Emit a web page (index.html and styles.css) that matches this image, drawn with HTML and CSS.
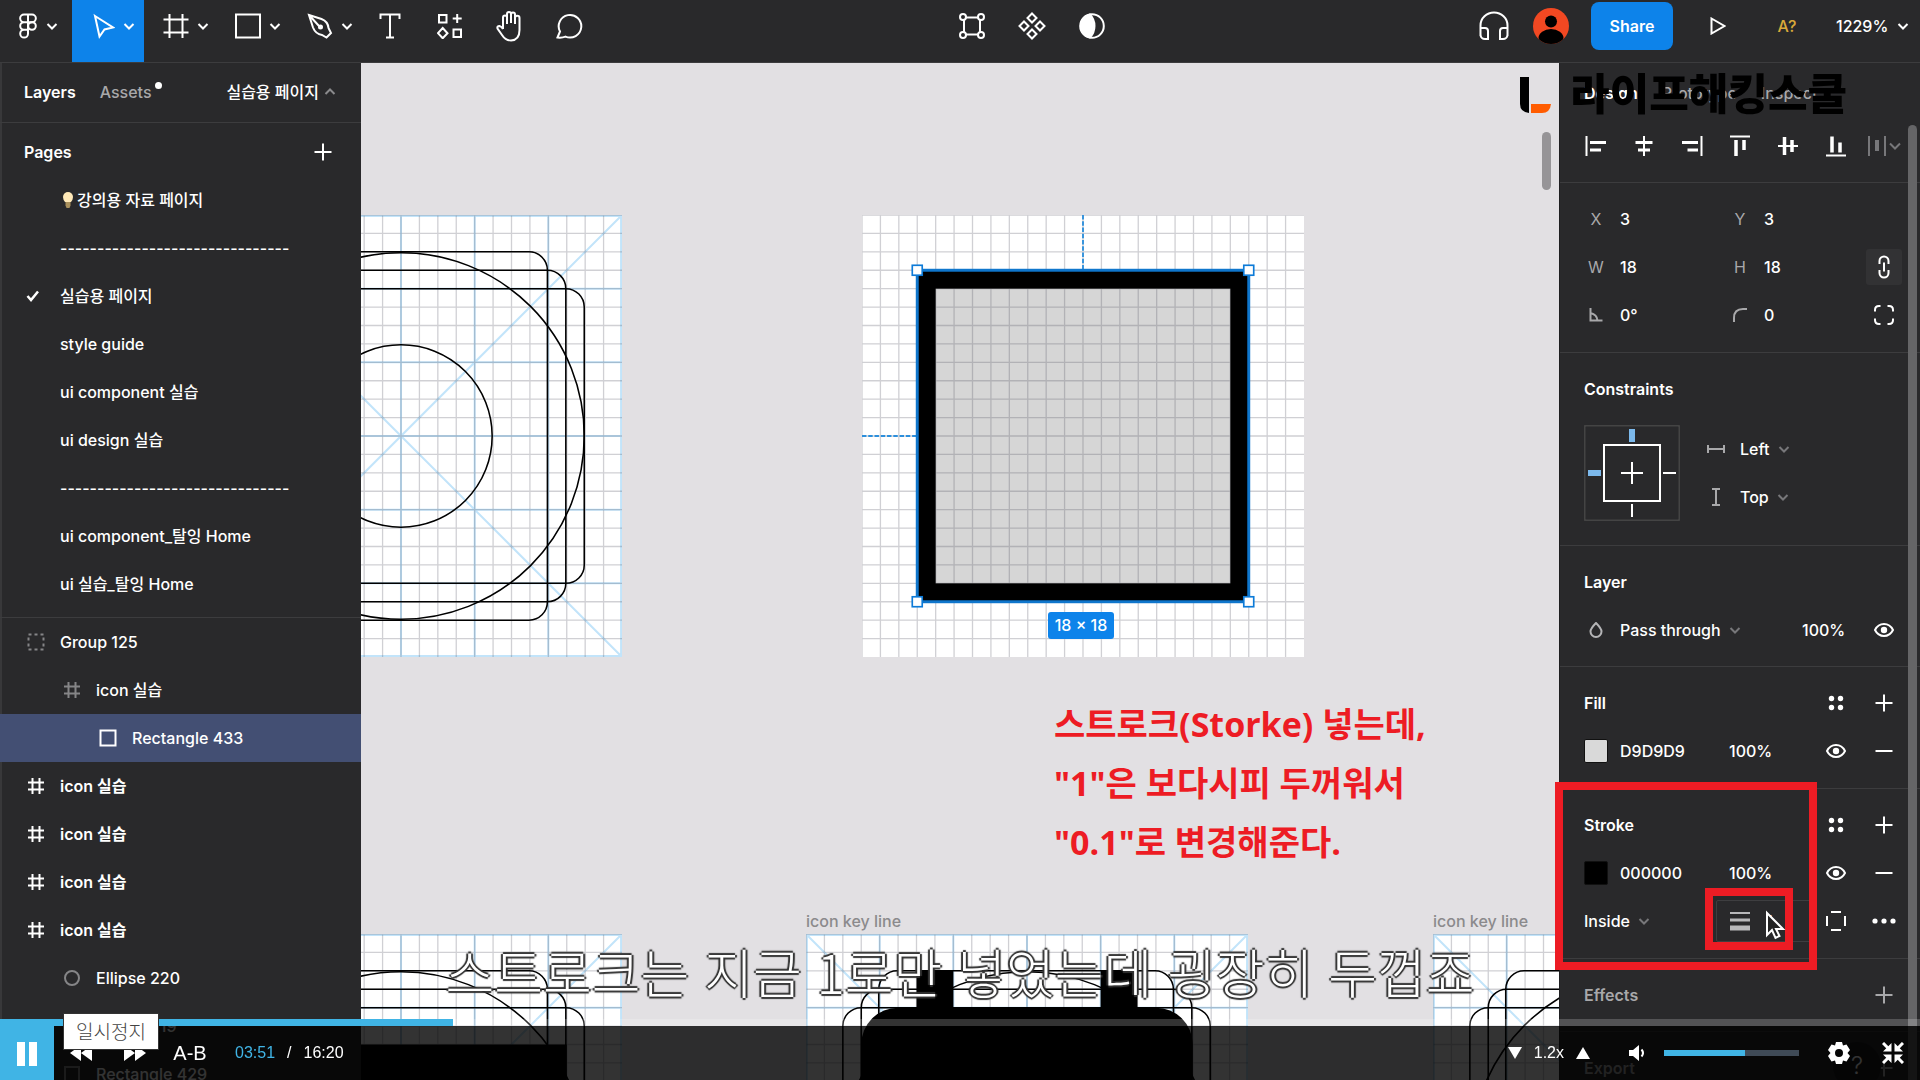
FILE: index.html
```html
<!DOCTYPE html>
<html lang="ko">
<head>
<meta charset="utf-8">
<title>Icon 실습</title>
<link rel="stylesheet" href="styles.css">
</head>
<body>
<svg class="defs" aria-hidden="true">
  <symbol id="chev" viewBox="0 0 12 12"><path d="M1.500 4 6 8.500 10.500 4"/></symbol>
  <symbol id="plus" viewBox="0 0 18 18"><path d="M9 0.500V17.500M0.500 9H17.500"/></symbol>
  <symbol id="minus" viewBox="0 0 18 18"><path d="M0.500 9H17.500"/></symbol>
  <symbol id="hash" viewBox="0 0 18 18"><path d="M5.500 1V17M12.500 1V17M1 5.500H17M1 12.500H17"/></symbol>
  <symbol id="dots4" viewBox="0 0 16 16"><g fill="currentColor" stroke="none"><circle cx="3.500" cy="3.500" r="2.700"/><circle cx="12.500" cy="3.500" r="2.700"/><circle cx="3.500" cy="12.500" r="2.700"/><circle cx="12.500" cy="12.500" r="2.700"/></g></symbol>
  <symbol id="eye" viewBox="0 0 20 14"><path d="M1 7C5-1 15-1 19 7 15 15 5 15 1 7Z"/><circle cx="10" cy="7" r="3.200" fill="currentColor" stroke="none"/></symbol>
  <symbol id="grid" viewBox="0 0 24 24">
    <path stroke="#50505f" stroke-opacity=".27" stroke-width=".07" d="M0 0V24M1 0V24M2 0V24M3 0V24M4 0V24M5 0V24M6 0V24M7 0V24M8 0V24M9 0V24M10 0V24M11 0V24M12 0V24M13 0V24M14 0V24M15 0V24M16 0V24M17 0V24M18 0V24M19 0V24M20 0V24M21 0V24M22 0V24M23 0V24M0 0H24M0 1H24M0 2H24M0 3H24M0 4H24M0 5H24M0 6H24M0 7H24M0 8H24M0 9H24M0 10H24M0 11H24M0 12H24M0 13H24M0 14H24M0 15H24M0 16H24M0 17H24M0 18H24M0 19H24M0 20H24M0 21H24M0 22H24M0 23H24"/>
  </symbol>
  <symbol id="keyline" viewBox="0 0 24 24">
    <rect width="24" height="24" fill="#fff" stroke="none"/>
    <path stroke="#a8d8f8" stroke-opacity=".7" stroke-width=".11" d="M.05 .05H23.950V23.950H.05ZM4 0V24M8 0V24M12 0V24M16 0V24M20 0V24M0 4H24M0 8H24M0 12H24M0 16H24M0 20H24M0 0 24 24M24 0 0 24"/>
    <use href="#grid" width="24" height="24"/>
    <g stroke="#000" stroke-width=".085"><rect x="3.950" y="2" width="16" height="20" rx="1"/><rect x="3" y="3" width="17.950" height="18" rx="1"/><rect x="2" y="4" width="19.950" height="16" rx="1"/><circle cx="12" cy="12" r="9.950"/><circle cx="12" cy="12" r="4.950"/></g>
  </symbol>
</svg>

<div class="app">
  <header class="topbar">
    <nav class="tools" aria-label="Tools">
      <button class="tool menu" aria-label="Main menu"><svg width="20" height="26" viewBox="0 0 20 26"><path d="M10 1.500H6a3.800 3.800 0 0 0 0 7.700h4ZM10 1.500h4a3.800 3.800 0 0 1 0 7.700h-4ZM10 9.200H6a3.800 3.800 0 0 0 0 7.600h4ZM10 16.800H6A3.900 3.900 0 1 0 10 20.700Z"/><circle cx="14" cy="13" r="3.800"/></svg><svg width="12" height="12"><use href="#chev"/></svg></button>
      <button class="tool wide active" aria-label="Move"><svg width="22" height="26" viewBox="0 0 22 26"><path d="M2 3 20 14.500 11.500 16.500 6.500 23.500Z"/></svg><svg width="12" height="12"><use href="#chev"/></svg></button>
      <button class="tool wide" aria-label="Frame"><svg width="26" height="26" viewBox="0 0 26 26"><path d="M6.500 1V25M19.500 1V25M.5 6.500H25.500M.5 19.500H25.500"/></svg><svg width="12" height="12"><use href="#chev"/></svg></button>
      <button class="tool wide" aria-label="Rectangle"><svg width="26" height="26" viewBox="0 0 26 26"><rect x="1" y="1.500" width="24" height="23"/></svg><svg width="12" height="12"><use href="#chev"/></svg></button>
      <button class="tool wide" aria-label="Pen"><svg width="26" height="26" viewBox="0 0 26 26"><path d="M2 2 14.500 6Q21 8.500 21.500 15L24 20 19.500 24.500 15 22Q8.500 21 6 14.500ZM2 2 12 13"/><circle cx="13.500" cy="14" r="1.500" fill="currentColor"/></svg><svg width="12" height="12"><use href="#chev"/></svg></button>
      <button class="tool" aria-label="Text"><svg width="22" height="26" viewBox="0 0 22 26"><path d="M1.500 6V1.500H20.500V6M11 1.500V24.500M7 24.500H15"/></svg></button>
      <button class="tool" aria-label="Resources"><svg width="26" height="26" viewBox="0 0 26 26"><path d="M2 2H9.500V9.500H2ZM16.500 16.500H24V24H16.500ZM20.200 1V10M15.700 5.500H24.700M5.700 15 10.500 20.200 5.700 25.300 1 20.200Z"/></svg></button>
      <button class="tool" aria-label="Hand"><svg width="30" height="32" viewBox="0 0 30 32"><path d="M8 19V7.500a2 2 0 0 1 4 0V14M12 13V4a2 2 0 0 1 4 0V13M16 13V4.500a2 2 0 0 1 4 0V14M20 14V8a2 2 0 0 1 4.500 0V20Q24.500 30 16 30.500 10.500 30.500 7 25L2.500 18.500Q1.800 16 4.500 16 6.500 16.500 8 19"/></svg></button>
      <button class="tool" aria-label="Comment"><svg width="28" height="26" viewBox="0 0 28 26"><path d="M1.500 24.500 4 18.500A11.300 11.300 0 1 1 9.500 23.600Q6 25 1.500 24.500Z"/></svg></button>
    </nav>
    <div class="tools">
      <button class="tool" aria-label="Edit object"><svg width="26" height="26" viewBox="0 0 26 26"><circle cx="4" cy="4" r="3"/><circle cx="22" cy="4" r="3"/><circle cx="4" cy="22" r="3"/><circle cx="22" cy="22" r="3"/><path d="M7 4.500H19M7 21.500H19M5 7V19M21 7V19"/></svg></button>
      <button class="tool" aria-label="Create component"><svg width="28" height="28" viewBox="0 0 28 28"><path d="M14 1.500 18.500 6 14 10.500 9.500 6ZM14 17.500 18.500 22 14 26.500 9.500 22ZM6 9.500 10.500 14 6 18.500 1.500 14ZM22 9.500 26.500 14 22 18.500 17.500 14Z"/></svg></button>
      <button class="tool" aria-label="Mask"><svg width="26" height="26" viewBox="0 0 26 26"><circle cx="13" cy="13" r="11.800"/><path fill="currentColor" d="M11 1.500A11.800 11.800 0 0 0 11 24.500 17 17 0 0 0 11 1.500Z"/></svg></button>
    </div>
    <div class="account">
      <button class="tool" aria-label="Audio"><svg width="30" height="30" viewBox="0 0 30 30"><path d="M1.500 25V14.500a13.500 13 0 0 1 27 0V25M1.500 17H6a3 3 0 0 1 3 3V28H6a4.500 4.500 0 0 1-4.500-4.500ZM28.500 17H24a3 3 0 0 0-3 3V28h3a4.500 4.500 0 0 0 4.500-4.500Z"/></svg></button>
      <svg class="avatar" viewBox="0 0 36 36"><defs><clipPath id="av"><circle cx="18" cy="18" r="18"/></clipPath></defs><g clip-path="url(#av)" stroke="none"><rect width="36" height="36" fill="#f24822"/><circle cx="18" cy="13.500" r="6" fill="#000"/><ellipse cx="18" cy="30" rx="12.500" ry="9" fill="#000"/></g></svg>
      <button class="share">Share</button>
      <button class="tool play" aria-label="Present"><svg width="16" height="18" viewBox="0 0 16 18"><path d="M1.500 1.500 14.500 9 1.500 16.500Z"/></svg></button>
      <button class="tool missing">A?</button>
      <button class="zoom">1229%<svg width="12" height="12"><use href="#chev"/></svg></button>
    </div>
  </header>

  <main class="workspace">
    <aside class="side">
      <div class="side-tabs"><button class="on">Layers</button><button class="assets">Assets</button><button class="page-name">실습용 페이지<svg class="flip" width="12" height="12"><use href="#chev"/></svg></button></div>
      <section class="pages">
        <div class="pages-head"><h2>Pages</h2><button aria-label="Add page"><svg width="18" height="18"><use href="#plus"/></svg></button></div>
        <ul class="rows">
          <li><svg class="bulb" width="12" height="18" viewBox="0 0 12 18"><path d="M1 6a5 5 0 0 1 10 0Q11 8.500 9 11H3Q1 8.500 1 6Z" fill="#ffe9b8"/><path d="M3.500 11H8.500V14.500L7.500 17H4.500L3.500 14.500Z" fill="#a9905c"/></svg>강의용 자료 페이지</li>
          <li>-------------------------------</li>
          <li class="checked"><svg width="14" height="12" viewBox="0 0 14 12"><path stroke-width="2.500" d="M1.500 6 5 10 12 1.500"/></svg>실습용 페이지</li>
          <li>style guide</li>
          <li>ui component 실습</li>
          <li>ui design 실습</li>
          <li>-------------------------------</li>
          <li>ui component_탈잉 Home</li>
          <li>ui 실습_탈잉 Home</li>
        </ul>
      </section>
      <ul class="layers">
        <li class="dimicon"><svg width="18" height="18" viewBox="0 0 18 18"><rect x="1.500" y="1.500" width="15" height="15" stroke-dasharray="3 3"/></svg>Group 125</li>
        <li class="in1 dimicon"><svg width="18" height="18"><use href="#hash"/></svg>icon 실습</li>
        <li class="in2 selected"><svg width="18" height="18" viewBox="0 0 18 18"><rect x="1.500" y="1.500" width="15" height="15" stroke-width="2"/></svg>Rectangle 433</li>
        <li class="strong"><svg width="18" height="18"><use href="#hash"/></svg>icon 실습</li>
        <li class="strong"><svg width="18" height="18"><use href="#hash"/></svg>icon 실습</li>
        <li class="strong"><svg width="18" height="18"><use href="#hash"/></svg>icon 실습</li>
        <li class="strong"><svg width="18" height="18"><use href="#hash"/></svg>icon 실습</li>
        <li class="in1 dimicon"><svg width="18" height="18" viewBox="0 0 18 18"><circle cx="9" cy="9" r="7"/></svg>Ellipse 220</li>
        <li class="in1 dimicon"><svg width="18" height="18" viewBox="0 0 18 18"><circle cx="9" cy="9" r="7"/></svg>Ellipse 219</li>
        <li class="in1 dimicon"><svg width="18" height="18" viewBox="0 0 18 18"><rect x="2" y="2" width="14" height="14"/></svg>Rectangle 429</li>
      </ul>
    </aside>

    <section class="canvas" aria-label="Canvas">
      <svg class="frame f1" viewBox="0 0 24 24"><use href="#keyline"/></svg>
      <svg class="frame f2" viewBox="0 0 24 24">
        <rect width="24" height="24" fill="#fff" stroke="none"/>
        <rect x="3" y="3" width="18" height="18" fill="#d6d6d6" stroke="none"/>
        <use href="#grid"/>
        <rect x="3.500" y="3.500" width="17" height="17" stroke="#000" stroke-width="1"/>
        <path d="M12 0V3M0 12H3" stroke="#2c8fdc" stroke-width=".1" stroke-dasharray=".24 .1"/>
        <rect x="3" y="3" width="18" height="18" stroke="#0f76cc" stroke-width=".16"/>
        <g fill="#fff" stroke="#0d7bd8" stroke-width=".09"><rect x="2.730" y="2.730" width=".54" height=".54"/><rect x="20.730" y="2.730" width=".54" height=".54"/><rect x="2.730" y="20.730" width=".54" height=".54"/><rect x="20.730" y="20.730" width=".54" height=".54"/></g>
      </svg>
      <span class="size-tag">18 × 18</span>
      <p class="note">스트로크(Storke) 넣는데,<br>"1"은 보다시피 두꺼워서<br>"0.1"로 변경해준다.</p>
      <svg class="frame f3" viewBox="0 0 24 24"><use href="#keyline"/><path fill="#000" stroke="none" d="M3 6H21V24H3Z"/></svg>
      <span class="frame-label l4">icon key line</span>
      <svg class="frame f4" viewBox="0 0 24 24"><use href="#keyline"/><path fill="#000" stroke="none" d="M6 2H8V4H16V2H18V4H19A2 2 0 0 1 21 6V24H3V6A2 2 0 0 1 5 4H6Z"/></svg>
      <span class="frame-label l5">icon key line</span>
      <svg class="frame f5" viewBox="0 0 24 24"><use href="#keyline"/></svg>
      <div class="canvas-scroll"></div>
    </section>

    <aside class="design">
      <div class="design-tabs"><button class="on">Design</button><button>Prototype</button><button>Inspect</button></div>
      <div class="align">
        <button aria-label="Align left"><svg width="22" height="22" viewBox="0 0 22 22"><path d="M1.500 1V21"/><path stroke-width="3" d="M5 7.500H21M5 15H16"/></svg></button>
        <button aria-label="Align horizontal centers"><svg width="22" height="22" viewBox="0 0 22 22"><path d="M11 1V21"/><path stroke-width="3" d="M2.500 7.500H19.500M5 15H17"/></svg></button>
        <button aria-label="Align right"><svg width="22" height="22" viewBox="0 0 22 22"><path d="M20.500 1V21"/><path stroke-width="3" d="M1 7.500H17M6.500 15H17"/></svg></button>
        <button aria-label="Align top"><svg width="22" height="22" viewBox="0 0 22 22"><path d="M1 1.500H21"/><path stroke-width="3.500" d="M7 5V21M15 5V15"/></svg></button>
        <button aria-label="Align vertical centers"><svg width="22" height="22" viewBox="0 0 22 22"><path d="M1 11H21"/><path stroke-width="3.500" d="M7.500 2V20M15 5V17"/></svg></button>
        <button aria-label="Align bottom"><svg width="22" height="22" viewBox="0 0 22 22"><path d="M1 20.500H21"/><path stroke-width="3.500" d="M7 1.500V17.500M15 7.500V17.500"/></svg></button>
        <button class="faint" aria-label="Tidy up"><svg width="34" height="22" viewBox="0 0 34 22"><path d="M2 1V21M18 1V21"/><path stroke-width="4" d="M10 5V16"/><path d="M23 8.500 28 13.500 33 8.500"/></svg></button>
      </div>

      <section class="panel roomy">
        <div class="row geo"><label for="x">X</label><input id="x" value="3"><label for="y">Y</label><input id="y" value="3"></div>
        <div class="row geo"><label for="w">W</label><input id="w" value="18"><label for="h">H</label><input id="h" value="18"><button class="linked" aria-label="Constrain proportions"><svg width="12" height="24" viewBox="0 0 12 24"><path d="M1.500 9V6a4.500 4.500 0 0 1 9 0V9M1.500 15V18a4.500 4.500 0 0 0 9 0V15M6 7.500V16.500"/></svg></button></div>
        <div class="row geo"><label for="r" aria-label="Rotation"><svg width="14" height="14" viewBox="0 0 14 14"><path d="M1.500 0V12.500H13.500M1.500 5Q8 6.500 8.500 12.500"/></svg></label><input id="r" value="0°"><label for="cr" aria-label="Corner radius"><svg width="14" height="14" viewBox="0 0 14 14"><path d="M1 14V10Q1 1 10 1H14"/></svg></label><input id="cr" value="0"><button aria-label="Independent corners"><svg width="20" height="20" viewBox="0 0 20 20"><path d="M1 6.500V5Q1 1 5 1H6.500M13.500 1H15Q19 1 19 5V6.500M19 13.500V15Q19 19 15 19H13.500M6.500 19H5Q1 19 1 15V13.500"/></svg></button></div>
      </section>

      <section class="panel">
        <h2 class="row">Constraints</h2>
        <div class="constraints">
          <svg width="96" height="96" viewBox="0 0 96 96"><rect x=".5" y=".5" width="95" height="95" rx="2" stroke="#444"/><rect x="20" y="20" width="56" height="56" stroke="#fff" stroke-width="2"/><path stroke="#fff" stroke-width="2" d="M48 37V59M37 48H59M79 48H92M48 79V92"/><path stroke="#7cb9ec" stroke-width="6" d="M48 4V17M4 48H17"/></svg>
          <div>
            <div class="pick"><svg class="kind" width="18" height="10" viewBox="0 0 18 10"><path d="M1 1V9M17 1V9M1 5H17"/></svg><span class="choice"><select aria-label="Horizontal constraint"><option>Left</option></select><svg width="12" height="12"><use href="#chev"/></svg></span></div>
            <div class="pick"><svg class="kind" width="10" height="18" viewBox="0 0 10 18"><path d="M1 1H9M1 17H9M5 1V17"/></svg><span class="choice"><select aria-label="Vertical constraint"><option>Top</option></select><svg width="12" height="12"><use href="#chev"/></svg></span></div>
          </div>
        </div>
      </section>

      <section class="panel">
        <h2 class="row">Layer</h2>
        <div class="row blend"><svg class="grey" width="24" height="16" viewBox="0 0 24 16"><path d="M12 1Q6.500 6.500 6.500 9.500A5.500 5.500 0 0 0 17.500 9.500Q17.500 6.500 12 1Z"/></svg><span class="choice"><select aria-label="Blend mode"><option>Pass through</option></select><svg width="12" height="12"><use href="#chev"/></svg></span><input aria-label="Layer opacity" value="100%"><button aria-label="Visible"><svg width="20" height="14"><use href="#eye"/></svg></button></div>
      </section>

      <section class="panel roomy">
        <div class="row paint"><h2>Fill</h2><button class="c4" aria-label="Styles"><svg width="16" height="16"><use href="#dots4"/></svg></button><button aria-label="Add fill"><svg width="18" height="18"><use href="#plus"/></svg></button></div>
        <div class="row paint"><span class="swatch light"></span><input aria-label="Fill colour" value="D9D9D9"><input aria-label="Fill opacity" value="100%"><button aria-label="Visible"><svg width="20" height="14"><use href="#eye"/></svg></button><button aria-label="Remove fill"><svg width="18" height="18"><use href="#minus"/></svg></button></div>
      </section>

      <section class="panel roomy">
        <div class="row paint"><h2>Stroke</h2><button class="c4" aria-label="Styles"><svg width="16" height="16"><use href="#dots4"/></svg></button><button aria-label="Add stroke"><svg width="18" height="18"><use href="#plus"/></svg></button></div>
        <div class="row paint"><span class="swatch"></span><input aria-label="Stroke colour" value="000000"><input aria-label="Stroke opacity" value="100%"><button aria-label="Visible"><svg width="20" height="14"><use href="#eye"/></svg></button><button aria-label="Remove stroke"><svg width="18" height="18"><use href="#minus"/></svg></button></div>
        <div class="row weight"><span class="choice"><select aria-label="Stroke position"><option>Inside</option></select><svg width="12" height="12"><use href="#chev"/></svg></span><label class="weight-box"><svg width="20" height="20" viewBox="0 0 20 20"><path stroke-width="2" d="M0 2H20"/><path stroke-width="3" d="M0 9H20"/><path stroke-width="5" d="M0 17H20"/></svg><input aria-label="Stroke weight" value="1"></label><button aria-label="Sides"><svg width="20" height="20" viewBox="0 0 20 20"><path stroke-width="2" d="M5 1H15M5 19H15M1 5V15M19 5V15"/></svg></button><button aria-label="More"><svg width="24" height="6" viewBox="0 0 24 6"><g fill="currentColor" stroke="none"><circle cx="3" cy="3" r="2.600"/><circle cx="12" cy="3" r="2.600"/><circle cx="21" cy="3" r="2.600"/></g></svg></button></div>
        <div class="mark big"></div>
        <div class="mark small"></div>
        <svg class="pointer" width="24" height="32" viewBox="0 0 24 32"><path fill="#222" stroke="#fff" stroke-width="2" d="M4 3V25L9 20 12.500 28 16.500 26 13 19H20Z"/></svg>
      </section>

      <section class="panel off"><div class="row paint"><h2>Effects</h2><button class="c5" aria-label="Add effect"><svg width="18" height="18"><use href="#plus"/></svg></button></div></section>
      <section class="panel off"><div class="row paint"><h2>Export</h2><button class="c5" aria-label="Add export"><svg width="18" height="18"><use href="#plus"/></svg></button></div></section>
      <div class="panel-scroll"></div>
      <button class="help" aria-label="Help">?</button>
    </aside>
  </main>
</div>

<div class="brand"><svg width="31" height="36" viewBox="0 0 31 36"><g stroke="none"><path fill="#000" d="M0 0H9V36Q0 35 0 27Z"/><path fill="#ff5c00" d="M11 27H31Q30 36 22 36H11Z"/></g></svg><span>라이프해킹스쿨</span></div>

<p class="caption">스트로크는 지금 1로만 넣었는데 굉장히 두껍죠</p>

<div class="player">
  <div class="progress"><div class="played"></div></div>
  <div class="controls">
    <button class="pause" aria-label="일시정지"><svg width="20" height="24" viewBox="0 0 20 24"><path fill="#fff" stroke="none" d="M0 0H8V24H0ZM12 0H20V24H12Z"/></svg></button>
    <button class="seek" aria-label="뒤로"><svg width="22" height="18" viewBox="0 0 22 18"><path fill="#fff" stroke="none" d="M11 1V17L0 9ZM22 1V17L11 9Z"/></svg></button>
    <button class="seek" aria-label="앞으로"><svg width="22" height="18" viewBox="0 0 22 18"><path fill="#fff" stroke="none" d="M0 1 11 9 0 17ZM11 1 22 9 11 17Z"/></svg></button>
    <button class="ab">A-B</button>
    <span class="now">03:51</span><span class="slash">/</span><span>16:20</span>
    <div class="right">
      <button aria-label="느리게"><svg width="16" height="12" viewBox="0 0 16 12"><path fill="#fff" stroke="none" d="M1 0H15L8 12Z"/></svg></button>
      <span class="rate">1.2x</span>
      <button aria-label="빠르게"><svg width="16" height="12" viewBox="0 0 16 12"><path fill="#fff" stroke="none" d="M1 12H15L8 0Z"/></svg></button>
      <button class="mute" aria-label="음소거"><svg width="16" height="18" viewBox="0 0 16 18"><path fill="#fff" stroke="none" d="M0 6H4L10 1V17L4 12H0Z"/><path stroke="#fff" stroke-width="2" d="M12.500 5.500Q15.500 9 12.500 12.500"/></svg></button>
      <input class="volume" type="range" min="0" max="100" value="60" aria-label="음량">
      <button class="gear" aria-label="설정"><svg width="24" height="24" viewBox="0 0 24 24"><path fill="#fff" fill-rule="evenodd" stroke="none" d="M9 1H15L16 4.500 19.500 3.500 23 9 20.500 12 23 15 19.500 20.500 16 19.500 15 23H9L8 19.500 4.500 20.500 1 15 3.500 12 1 9 4.500 3.500 8 4.500ZM12 8A4 4 0 1 0 12 16 4 4 0 1 0 12 8Z"/></svg></button>
      <button class="shrink" aria-label="전체 화면 종료"><svg width="22" height="22" viewBox="0 0 22 22"><path stroke="#fff" stroke-width="3" d="M1 1 6 6M21 1 16 6M1 21 6 16M21 21 16 16"/><path fill="#fff" stroke="none" d="M9.500 1V9.500H1ZM12.500 1V9.500H21ZM9.500 21V12.500H1ZM12.500 21V12.500H21Z"/></svg></button>
    </div>
  </div>
  <div class="tip" role="tooltip">일시정지</div>
</div>
</body>
</html>
```
FILE: styles.css
```css
* { box-sizing: border-box; }
body, h2, ul, p { margin: 0; padding: 0; }
body {
  background: #29292b;
  color: #fff;
  font: 500 16px/24px Inter, "Noto Sans CJK KR", sans-serif;
  overflow: hidden;
}
ul { list-style: none; }
button, input, select { font: inherit; color: inherit; background: none; border: 0; padding: 0; margin: 0; }
button { display: flex; align-items: center; justify-content: center; }
input { width: 100%; min-width: 0; }
select { appearance: none; }
h2 { font-size: 16px; font-weight: 600; }
svg { fill: none; stroke: currentColor; stroke-width: 2; flex: none; display: block; }
.defs { position: absolute; width: 0; height: 0; }

.app { display: flex; flex-direction: column; height: 100vh; }

/* top bar */
.topbar { display: flex; justify-content: space-between; height: 63px; border-bottom: 1px solid #3c3c3e; flex: none; }
.tools, .account { display: flex; }
.tool { width: 60px; height: 62px; padding-bottom: 10px; }
.tool.menu { width: 72px; gap: 8px; padding-left: 4px; }
.tool.wide { width: 72px; gap: 8px; padding-left: 12px; }
.tool.active { background: #0d83ea; }
.account { width: 456px; align-items: flex-start; }
.avatar { width: 36px; height: 36px; margin: 8px 22px 0 9px; }
.share { width: 82px; height: 48px; margin-top: 2px; border-radius: 8px; background: #0d83ea; font-weight: 600; }
.play { margin-left: 15px; }
.missing { color: #d9a93a; width: 78px; }
.zoom { height: 52px; gap: 9px; padding-left: 10px; }

.workspace { display: grid; grid-template-columns: 361px 1fr 361px; flex: 1; min-height: 0; }

/* left panel */
.side { overflow: hidden; box-shadow: inset 2px 0 #38383a; }
.side-tabs { display: flex; align-items: center; gap: 24px; height: 60px; padding: 0 25px 2px 24px; border-bottom: 1px solid #3c3c3e; color: #a8a8aa; }
.on { color: #fff; font-weight: 600; }
.assets { position: relative; }
.assets::after { content: ""; position: absolute; right: -10px; top: 2px; width: 7px; height: 7px; border-radius: 50%; background: #fff; }
.page-name { margin-left: auto; color: #fff; gap: 5px; }
.page-name svg { color: #8a8a8c; }
.flip { transform: rotate(180deg); }
.pages { padding: 5px 0 9px; border-bottom: 1px solid #3c3c3e; }
.pages-head { display: flex; justify-content: space-between; align-items: center; height: 48px; padding: 0 29px 0 24px; }
.rows li, .layers li { display: flex; align-items: center; height: 48px; padding-left: 60px; white-space: nowrap; }
.bulb { margin: 0 3px 0 2px; stroke: none; }
.rows .checked { padding-left: 26px; gap: 20px; }
.layers li { padding-left: 27px; gap: 15px; }
.layers .in1 { padding-left: 63px; }
.layers .in2 { padding-left: 99px; }
.layers .selected { background: #434f73; }
.layers .strong { font-weight: 600; }
.dimicon svg { color: #858587; }

/* canvas: items are placed freely */
.canvas { position: relative; overflow: hidden; background: #e2e0e3; }
.frame { position: absolute; width: 442px; height: 442px; }
.f1 { left: -181px; top: 152px; }
.f2 { left: 501px; top: 152px; }
.f3 { left: -181px; top: 871px; }
.f4 { left: 445px; top: 871px; }
.f5 { left: 1072px; top: 871px; }
.frame-label { position: absolute; top: 846px; color: #8b8a8c; }
.l4 { left: 445px; }
.l5 { left: 1072px; }
.size-tag { position: absolute; left: 687px; top: 549px; width: 66px; height: 27px; border-radius: 3px; background: #0d83ea; line-height: 27px; text-align: center; }
.note { position: absolute; left: 693px; top: 632px; color: #ed1c24; font: bold 34px/59px "Open Sans", "Noto Sans CJK KR", sans-serif; white-space: nowrap; }
.canvas-scroll { position: absolute; right: 8px; top: 69px; width: 9px; height: 58px; border-radius: 5px; background: #969497; }

/* right panel */
.design { position: relative; border-left: 1px solid #1f1f21; min-height: 0; }
.design-tabs { display: flex; align-items: center; gap: 24px; height: 59px; padding-left: 24px; color: #a8a8aa; }
.align { display: flex; height: 61px; padding: 0 12px 12px; border-bottom: 1px solid #3c3c3e; }
.align button { width: 48px; }
.faint { color: #77777a; }
.panel { position: relative; padding: 12px 12px 12px 24px; border-bottom: 1px solid #3c3c3e; }
.roomy { padding-bottom: 13px; }
.row { display: grid; align-items: center; height: 48px; }
.geo { grid-template-columns: 36px 108px 36px 1fr 48px; }
.geo label { display: flex; justify-content: center; width: 24px; color: #a8a8aa; font-weight: 400; }
.geo button, .blend button, .paint button, .weight button { height: 48px; }
.geo .linked { justify-self: center; width: 36px; height: 36px; border-radius: 3px; background: #323234; }
.constraints { display: flex; gap: 24px; padding: 12px 0; }
.pick { display: grid; grid-template-columns: 24px auto; column-gap: 12px; align-items: center; height: 48px; }
.kind { justify-self: center; color: #a8a8aa; }
.choice { display: flex; align-items: center; gap: 8px; }
.choice svg { color: #77777a; }
.blend { grid-template-columns: 36px 1fr 58px 48px; }
.grey { color: #b4b4b6; }
.paint { grid-template-columns: 36px 109px 1fr 48px 48px; }
.paint h2 { grid-column: 1 / 4; }
.c4 { grid-column: 4; }
.c5 { grid-column: 5; }
.swatch { width: 24px; height: 24px; border: 1px solid #111; border-radius: 2px; background: #000; }
.swatch.light { background: #d9d9d9; }
.weight { grid-template-columns: 132px 96px 48px 48px; }
.weight-box { display: flex; align-items: center; gap: 16px; height: 42px; padding: 0 12px 0 13px; border: 1px solid #3e3e40; border-radius: 2px; }
.weight-box svg { color: #b8b8ba; }
.off { color: #a8a8aa; }
.mark { position: absolute; border: 8px solid #ed1c24; }
.big { left: -5px; top: -7px; width: 262px; height: 188px; }
.small { left: 145px; top: 99px; width: 88px; height: 62px; }
.pointer { position: absolute; left: 203px; top: 121px; }
.panel-scroll { position: absolute; right: 3px; top: 62px; bottom: 0; width: 9px; border-radius: 5px 5px 0 0; background: #656567; }
.help { position: absolute; right: 39px; bottom: -10px; width: 48px; height: 48px; border-radius: 50%; background: #1c1c1d; font-size: 24px; font-weight: 300; }

/* watermark and subtitle */
.brand { position: fixed; top: 77px; right: 73px; display: flex; gap: 19px; }
.brand span { color: #000; font: 900 43px/28px "Noto Sans CJK KR", sans-serif; }
.caption {
  position: fixed; left: 0; right: 0; bottom: 78px;
  text-align: center; white-space: nowrap;
  font: 300 53px/62px "Noto Sans CJK KR", sans-serif;
  text-shadow: 2px 0 1px #333, -2px 0 1px #333, 0 2px 1px #333, 0 -2px 1px #333;
}

/* video player */
.player { position: fixed; left: 0; right: 0; bottom: 0; }
.progress { height: 7px; background: rgba(255, 255, 255, .2); }
.played { width: 453px; height: 7px; background: #40b4e5; }
.controls { display: flex; align-items: center; height: 54px; background: rgba(0, 0, 0, .8); font: 16px/24px "Liberation Sans", sans-serif; }
.pause { width: 54px; height: 61px; margin-top: -7px; padding-top: 8px; background: #40b4e5; }
.seek { width: 54px; }
.ab { width: 56px; font-size: 20px; }
.now { color: #40b4e5; margin-left: 17px; }
.slash { margin: 0 12px; }
.right { display: flex; align-items: center; margin-left: auto; padding-right: 16px; }
.rate { margin: 0 11px; }
.mute { margin: 0 19px 0 38px; }
.volume { appearance: none; width: 135px; height: 6px; background: linear-gradient(to right, #40b4e5 60%, #3f4a56 60%); }
.volume::-webkit-slider-thumb { appearance: none; width: 0; height: 0; }
.gear { margin-left: 28px; }
.shrink { margin-left: 31px; }
.tip { position: absolute; left: 63px; top: -6px; width: 96px; height: 37px; border: 1px solid #333; background: #fff; color: #444; font: 300 19px/33px "Noto Sans CJK KR", sans-serif; text-align: center; }
```
